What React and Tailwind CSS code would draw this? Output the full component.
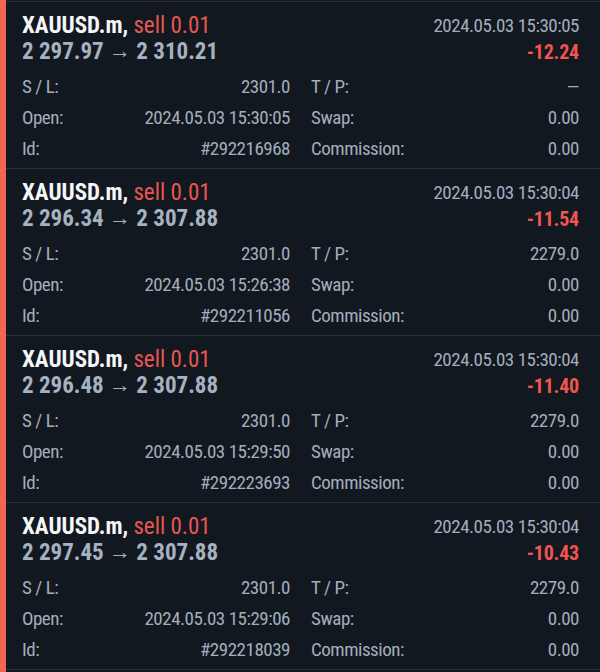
import React from "react";

const positions = [
  {
    open: "2 297.97",
    current: "2 310.21",
    time: "2024.05.03 15:30:05",
    profit: "-12.24",
    sl: "2301.0",
    tp: "—",
    openTime: "2024.05.03 15:30:05",
    id: "#292216968",
  },
  {
    open: "2 296.34",
    current: "2 307.88",
    time: "2024.05.03 15:30:04",
    profit: "-11.54",
    sl: "2301.0",
    tp: "2279.0",
    openTime: "2024.05.03 15:26:38",
    id: "#292211056",
  },
  {
    open: "2 296.48",
    current: "2 307.88",
    time: "2024.05.03 15:30:04",
    profit: "-11.40",
    sl: "2301.0",
    tp: "2279.0",
    openTime: "2024.05.03 15:29:50",
    id: "#292223693",
  },
  {
    open: "2 297.45",
    current: "2 307.88",
    time: "2024.05.03 15:30:04",
    profit: "-10.43",
    sl: "2301.0",
    tp: "2279.0",
    openTime: "2024.05.03 15:29:06",
    id: "#292218039",
  },
];

function Row({ label, value }) {
  return (
    <div className="flex h-[31px] items-center justify-between">
      <span>{label}</span>
      <span>{value}</span>
    </div>
  );
}

function PositionCard({ p }) {
  return (
    <div className="border-b border-[#2a313b] pl-4 pr-[21px] pt-[11px] pb-[3px]">
      {/* header: symbol / prices on left, time / profit on right */}
      <div className="flex justify-between">
        <div>
          <div className="h-[26px] text-[23px] leading-[26px]">
            <span className="font-bold text-[#f4f6f8]">XAUUSD.m,</span>{" "}
            <span className="text-[#e8564f]">sell 0.01</span>
          </div>
          <div className="h-[26px] text-[23px] font-bold leading-[26px] text-[#a7b2c0]">
            {p.open} <span className="relative -top-px text-[22px] font-normal">→</span> {p.current}
          </div>
        </div>
        <div className="text-right">
          <div className="h-[26px] text-[19px] leading-[26px] tracking-[-0.025em] text-[#a3aebb]">{p.time}</div>
          <div className="h-[26px] text-[20px] font-bold leading-[26px] tracking-[-0.01em] text-[#f25450]">{p.profit}</div>
        </div>
      </div>

      <div className="mt-[7px] grid grid-cols-2 gap-x-[21px] text-[19px] tracking-[-0.025em] text-[#a3aebb]">
        <div>
          <Row label="S / L:" value={p.sl} />
          <Row label="Open:" value={p.openTime} />
          <Row label="Id:" value={p.id} />
        </div>
        <div>
          <Row label="T / P:" value={p.tp} />
          <Row label="Swap:" value="0.00" />
          <Row label="Commission:" value="0.00" />
        </div>
      </div>
    </div>
  );
}

export default function App() {
  return (
    <div
      className="flex h-[672px] w-[600px] overflow-hidden bg-[#121820]"
      style={{ fontFamily: '"Roboto Condensed", Roboto, "Liberation Sans Narrow", sans-serif', fontStretch: "75%" }}
    >
      <div className="w-[6px] shrink-0 bg-[#f26552]"></div>
      <div className="flex-1 pt-px">
        <div className="border-b border-[#2a313b]"></div>
        {positions.map((p) => (
          <PositionCard key={p.id} p={p} />
        ))}
      </div>
    </div>
  );
}
